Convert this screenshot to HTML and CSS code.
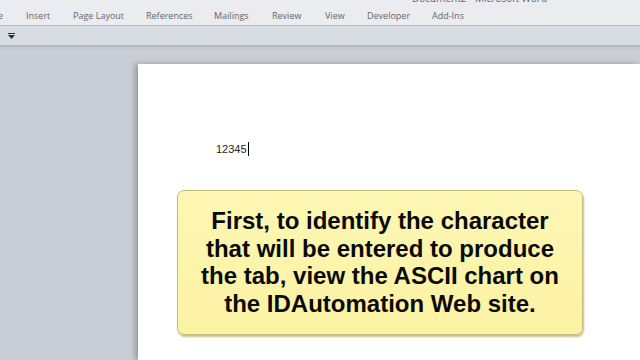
FILE: index.html
```html
<!DOCTYPE html>
<html>
<head>
    <meta charset="utf-8">
    <title>Document2 - Microsoft Word</title>
    <link rel="stylesheet" href="styles.css">
</head>
<body>
    <div class="title">Document2 - Microsoft Word</div>
    <div class="tabs">
        <span class="tab cut">e</span>
        <span class="tab w-ins">Insert</span>
        <span class="tab w-pl">Page Layout</span>
        <span class="tab w-ref">References</span>
        <span class="tab w-mail">Mailings</span>
        <span class="tab w-rev">Review</span>
        <span class="tab w-view">View</span>
        <span class="tab w-dev">Developer</span>
        <span class="tab">Add-Ins</span>
    </div>
    <div class="qbar">
        <svg class="qarrow" width="7" height="6" viewBox="0 0 7 6"><rect x="0" y="0" width="7" height="1" fill="#333"/><path d="M0 2h7L3.5 6z" fill="#333"/></svg>
    </div>
    <div class="workspace">
        <div class="page">
            <div class="typed">12345<span class="caret"></span></div>
            <div class="callout">
                First, to identify the character<br>
                that will be entered to produce<br>
                the tab, view the ASCII chart on<br>
                the IDAutomation Web site.
            </div>
        </div>
    </div>
</body>
</html>
```
FILE: styles.css
```css
html, body{
    margin: 0;
    padding: 0;
    width: 640px;
    height: 360px;
    overflow: hidden;
    background: #c9cdd5;
}
.title{
    position: absolute;
    top: -9px;
    left: 412px;
    font: 10px "Open Sans", "DejaVu Sans", sans-serif;
    color: #666;
}
.tabs{
    height: 26px;
    background: #eaecef;
    border-bottom: 1px solid #b9bec6;
    display: flex;
    align-items: flex-end;
    font: 9px "Open Sans", "DejaVu Sans", sans-serif;
    color: #62666d;
    box-sizing: border-box;
    padding-bottom: 3px;
}
.tab{
    display: inline-block;
}
.tab.cut{
    width: 28px;
    margin-left: -2px;
}
.w-ins{ width: 47px; }
.w-pl{ width: 73px; }
.w-ref{ width: 68px; }
.w-mail{ width: 58px; }
.w-rev{ width: 53px; }
.w-view{ width: 42px; }
.w-dev{ width: 65px; }
.qbar{
    height: 19px;
    background: #d7dbe2;
    border-bottom: 2px solid #b6bbc3;
    display: flex;
    align-items: center;
    padding-left: 8px;
}
.workspace{
    padding: 17px 0 0 138px;
    height: 296px;
    background: linear-gradient(#c4c8d0, #c9cdd5 6px);
}
.page{
    background: #fff;
    height: 296px;
    box-shadow: -3px 0 5px rgba(0,0,0,.25);
    padding: 78px 57px 0 39px;
    box-sizing: border-box;
}
.typed{
    font: 11px "Liberation Sans", Arial, sans-serif;
    color: #222;
    display: flex;
    align-items: center;
    height: 14px;
    padding-left: 39px;
}
.caret{
    display: inline-block;
    width: 1px;
    height: 14px;
    background: #000;
    margin-left: 1px;
}
.callout{
    margin-top: 34px;
    width: 406px;
    height: 145px;
    box-sizing: border-box;
    border: 1px solid #c2bb7c;
    border-radius: 7px;
    background: linear-gradient(#fdf7b4, #fcf2a3);
    box-shadow: 1px 2px 2px rgba(150,140,60,.55);
    font: bold 24px/27.5px "Liberation Sans", Arial, sans-serif;
    color: #0a0a0a;
    text-align: center;
    padding: 16px 2px 0;
    white-space: nowrap;
}
```
